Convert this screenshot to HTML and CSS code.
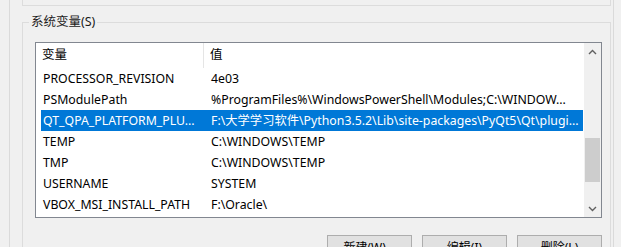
FILE: index.html
```html
<!DOCTYPE html>
<html lang="zh-CN">
<head>
  <meta charset="UTF-8">
  <title>环境变量</title>
  <link rel="stylesheet" href="styles.css">
</head>
<body>
  <div class="frame">
    <div class="group-top"></div>

    <div class="group">
      <span class="group-title">系统变量(S)</span>

      <div class="list">
        <div class="list-body">
          <div class="list-head">
            <div class="head-name">变量</div>
            <div class="head-value">值</div>
          </div>
          <div class="row"><div class="cell-name">PROCESSOR_REVISION</div><div class="cell-value">4e03</div></div>
          <div class="row"><div class="cell-name">PSModulePath</div><div class="cell-value">%ProgramFiles%\WindowsPowerShell\Modules;C:\WINDOW...</div></div>
          <div class="row selected"><div class="cell-name">QT_QPA_PLATFORM_PLU...</div><div class="cell-value">F:\大学学习软件\Python3.5.2\Lib\site-packages\PyQt5\Qt\plugi...</div></div>
          <div class="row"><div class="cell-name">TEMP</div><div class="cell-value">C:\WINDOWS\TEMP</div></div>
          <div class="row"><div class="cell-name">TMP</div><div class="cell-value">C:\WINDOWS\TEMP</div></div>
          <div class="row"><div class="cell-name">USERNAME</div><div class="cell-value">SYSTEM</div></div>
          <div class="row"><div class="cell-name">VBOX_MSI_INSTALL_PATH</div><div class="cell-value">F:\Oracle\</div></div>
        </div>

        <div class="scrollbar">
          <div class="sb-btn">
            <svg width="9" height="6" viewBox="0 0 9 6"><path d="M1 5 L4.5 1.5 L8 5" fill="none" stroke="#606060" stroke-width="1.4"/></svg>
          </div>
          <div class="sb-track">
            <div class="sb-thumb"></div>
          </div>
          <div class="sb-btn">
            <svg width="9" height="6" viewBox="0 0 9 6"><path d="M1 1 L4.5 4.5 L8 1" fill="none" stroke="#606060" stroke-width="1.4"/></svg>
          </div>
        </div>
      </div>

      <div class="buttons">
        <button>新建(W)...</button>
        <button>编辑(I)</button>
        <button>删除(L)</button>
      </div>
    </div>
  </div>
</body>
</html>
```

FILE: styles.css
```css
* {
  box-sizing: border-box;
}
body {
  margin: 0;
  background-color: #f0f0f0;
  font-family: "Noto Sans", "Noto Sans CJK SC", sans-serif;
  font-size: 12px;
  color: #000;
  overflow: hidden;
}
.frame {
  margin-left: 9px;
  width: 605px;
  height: 247px;
  padding: 0 2px 0 12px;
  border-left: 1px solid #dadada;
  border-right: 1px solid #dadada;
}
.group-top {
  height: 6px;
  border: 1px solid #dcdcdc;
  border-top: none;
}
.group {
  position: relative;
  margin-top: 16px;
  padding: 19px 8px 0 12px;
  border: 1px solid #dcdcdc;
  height: 240px;
}
.group-title {
  position: absolute;
  top: -9px;
  left: 6px;
  padding: 0 2px;
  line-height: 16px;
  font-size: 12.5px;
  background-color: #f0f0f0;
  color: #1a1a1a;
}
.list {
  display: flex;
  width: 567px;
  height: 176px;
  background: white;
  border: 1px solid #828790;
  font-size: 12.3px;
}
.list-body {
  flex: 1;
  overflow: hidden;
}
.list-head {
  display: flex;
  height: 25px;
  line-height: 24px;
  font-size: 12.5px;
}
.head-name {
  width: 168px;
  padding-left: 6px;
  border-right: 1px solid #e5e5e5;
}
.head-value {
  padding-left: 6px;
}
.row {
  display: flex;
  height: 21px;
  line-height: 21px;
  margin: 0 1px 0 5px;
  white-space: nowrap;
}
.row.selected {
  background-color: #0078d7;
  color: white;
}
.cell-name {
  width: 164px;
  padding-left: 2px;
  overflow: hidden;
}
.cell-value {
  flex: 1;
  padding-left: 6px;
  overflow: hidden;
}
.scrollbar {
  width: 17px;
  display: flex;
  flex-direction: column;
  background-color: #f0f0f0;
}
.sb-btn {
  height: 17px;
  display: flex;
  align-items: center;
  justify-content: center;
}
.sb-track {
  flex: 1;
  padding-top: 78px;
}
.sb-thumb {
  height: 44px;
  margin: 0 1px;
  background-color: #cdcdcd;
}
.buttons {
  display: flex;
  justify-content: flex-end;
  gap: 10px;
  width: 567px;
  margin-top: 17px;
}
button {
  width: 85px;
  height: 23px;
  padding: 0;
  background-color: #e1e1e1;
  border: 1px solid #adadad;
  font-family: inherit;
  font-size: 12px;
  color: #000;
}
```
